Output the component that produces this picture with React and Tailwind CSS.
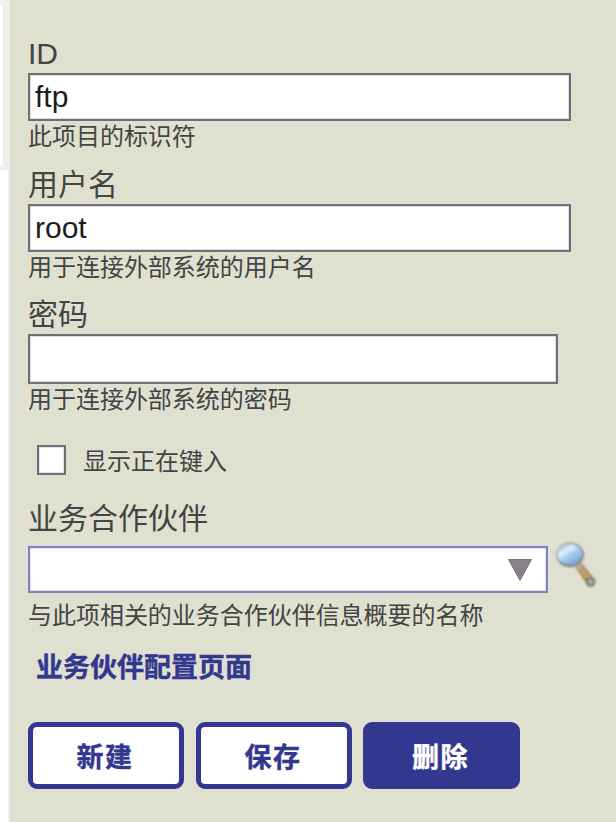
import { useState } from "react";

function Label({ className, children }) {
  return (
    <label className={`block whitespace-nowrap text-[30px] ${className}`}>{children}</label>
  );
}

function Hint({ className = "", children }) {
  return (
    <p className={`h-8 whitespace-nowrap text-2xl/8 tracking-[-0.03px] ${className}`}>{children}</p>
  );
}

function TextInput({ className, ...props }) {
  return (
    <input
      className={`block border-2 border-[#707074] bg-white px-[5px] text-[30px] text-[#1c1c1c] shadow-[inset_0_0_0_1px_#dcdcdc] outline-none ${className}`}
      {...props}
    />
  );
}

function Magnifier() {
  return (
    <svg width="44" height="50" viewBox="0 0 44 50" className="ml-[5px] shrink-0 self-start">
      <defs>
        <linearGradient id="glass" x1="0.1" y1="0.1" x2="0.8" y2="1">
          <stop offset="0" stopColor="#a9c5d8" />
          <stop offset="0.3" stopColor="#e2f0fa" />
          <stop offset="0.5" stopColor="#a9cfef" />
          <stop offset="1" stopColor="#6ba6dc" />
        </linearGradient>
        <linearGradient id="wood" x1="0" y1="1" x2="1" y2="0">
          <stop offset="0.3" stopColor="#8e7044" />
          <stop offset="0.5" stopColor="#c9a871" />
          <stop offset="0.7" stopColor="#86714e" />
        </linearGradient>
        <filter id="soft" x="-20%" y="-20%" width="140%" height="140%">
          <feGaussianBlur stdDeviation="0.8" />
        </filter>
      </defs>
      <g filter="url(#soft)">
        <ellipse cx="17" cy="14.8" rx="13.9" ry="12.2" fill="#73797c" />
        <path d="M22 27 28 22.5 42 39.5 34.5 45Z" fill="url(#wood)" />
        <circle cx="37.6" cy="42" r="4.8" fill="#77776a" />
        <circle cx="37.6" cy="41.6" r="2.6" fill="#aeb2a8" />
        <ellipse cx="16.4" cy="13.9" rx="12.8" ry="10.7" fill="#b5c1c6" />
        <ellipse cx="16.4" cy="14.4" rx="11.9" ry="9.8" fill="url(#glass)" />
        <path d="M21.5 26 27 22.5 30 26.5 25.5 30Z" fill="#b6ab94" />
      </g>
    </svg>
  );
}

function Button({ className, children }) {
  return (
    <button
      type="button"
      className={`h-[67px] rounded-[9px] border-[5px] border-[#32378f] pt-[5px] text-[27px] font-bold tracking-[1.4px] [-webkit-text-stroke:0.4px_currentColor] ${className}`}
    >
      <span className="relative right-px">{children}</span>
    </button>
  );
}

export default function App() {
  const [id, setId] = useState("ftp");
  const [user, setUser] = useState("root");
  const [password, setPassword] = useState("");

  return (
    <div className="flex h-[822px] w-[616px] overflow-hidden bg-white font-['Liberation_Sans','Noto_Sans_CJK_SC',sans-serif] text-[#444444]">
      <aside className="w-2 shrink-0">
        <div className="h-[170px] bg-[#f0f0e9] pt-[5px] pr-[5px]">
          <div className="h-40 bg-white" />
        </div>
      </aside>
      <main className="flex-1 border-l-2 border-[#efeff1] bg-[#dfe0d0] pt-[34px] pl-[18px]">
        <Label className="h-[39px] leading-[39px]">ID</Label>
        <TextInput className="h-12 w-[543px]" value={id} onChange={(e) => setId(e.target.value)} />
        <Hint>此项目的标识符</Hint>
        <Label className="h-[51px] leading-[63px]">用户名</Label>
        <TextInput className="h-12 w-[543px]" value={user} onChange={(e) => setUser(e.target.value)} />
        <Hint>用于连接外部系统的用户名</Hint>
        <Label className="h-[50px] leading-[62px]">密码</Label>
        <TextInput
          type="password"
          className="h-[50px] w-[530px]"
          value={password}
          onChange={(e) => setPassword(e.target.value)}
        />
        <Hint>用于连接外部系统的密码</Hint>

        <label className="mt-[29px] ml-[9px] flex h-[30px] items-center gap-[17px] text-2xl">
          <input
            type="checkbox"
            className="h-[30px] w-[29px] appearance-none border-2 border-[#707074] bg-white shadow-[inset_0_0_0_1px_#e4e4ea]"
          />
          <span className="pt-1">显示正在键入</span>
        </label>

        <Label className="mt-[25px] h-[40px] leading-[38px]">业务合作伙伴</Label>
        <div className="flex h-[53px] items-end">
          <div className="flex h-[47px] w-[520px] shrink-0 items-center justify-end border-2 border-[#8181d0] bg-white pr-[14px] shadow-[inset_0_0_0_1px_#e2e2f2]">
            <svg width="24" height="22" viewBox="0 0 24 22">
              <path d="M.5.5h23L12 21.5Z" fill="#868287" stroke="#59565a" strokeWidth="0.7" />
            </svg>
          </div>
          <Magnifier />
        </div>
        <Hint className="mt-[7px]">与此项相关的业务合作伙伴信息概要的名称</Hint>
        <a
          href="#profile"
          className="mt-[16px] ml-[8px] block h-10 text-[27px]/10 font-bold text-[#32378f] [-webkit-text-stroke:0.4px_currentColor]"
        >
          业务伙伴配置页面
        </a>
        <div className="mt-[34px] flex">
          <Button className="w-[156px] bg-white text-[#32378f]">新建</Button>
          <Button className="ml-3 w-[156px] bg-white text-[#32378f]">保存</Button>
          <Button className="ml-[11px] w-[157px] bg-[#32378f] text-white">删除</Button>
        </div>
      </main>
    </div>
  );
}
